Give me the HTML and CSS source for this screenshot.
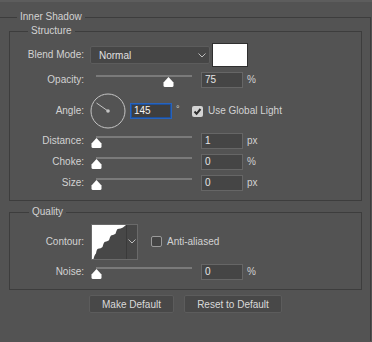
FILE: index.html
```html
<!DOCTYPE html>
<html lang="en">

<head>
    <meta charset="utf-8">
    <meta name="viewport" content="width=device-width, initial-scale=1.0">
    <title>Inner Shadow</title>
    <link rel="stylesheet" href="styles.css">
</head>

<body>

    <div class="edge"></div>

    <section class="panel">
        <div class="title">Inner Shadow</div>

        <div class="group">
            <div class="title title-structure">Structure</div>

            <div class="row row-blend">
                <span class="label">Blend Mode:</span>
                <div class="select">
                    <span>Normal</span>
                    <svg class="chev" width="8" height="5" viewBox="0 0 8 5">
                        <polyline points="0.5,0.5 4,4 7.5,0.5" fill="none" stroke="#bdbdbd" stroke-width="1" />
                    </svg>
                </div>
                <div class="swatch"></div>
            </div>

            <div class="row">
                <span class="label">Opacity:</span>
                <div class="slider">
                    <div class="track">
                        <svg class="thumb" style="left: 75%" width="11" height="10" viewBox="0 0 11 10">
                            <path d="M5.5 0 L10.5 5.5 V8.5 Q10.5 10 9 10 H2 Q0.5 10 0.5 8.5 V5.5 Z" fill="#fff" />
                        </svg>
                    </div>
                </div>
                <div class="num">75</div>
                <span class="unit">%</span>
            </div>

            <div class="row row-angle">
                <span class="label">Angle:</span>
                <svg class="dial" width="36" height="36" viewBox="0 0 36 36">
                    <circle cx="18" cy="18" r="17" fill="none" stroke="#c4c4c4" stroke-width="1" />
                    <line x1="18" y1="18" x2="6.5" y2="10" stroke="#c4c4c4" stroke-width="1" />
                    <circle cx="18" cy="18" r="1.8" fill="#c4c4c4" />
                </svg>
                <div class="num num-focus">145</div>
                <span class="unit unit-deg">°</span>
                <svg class="check" width="11" height="11" viewBox="0 0 11 11">
                    <rect x="0" y="0" width="11" height="11" rx="2" fill="#d4d4d4" />
                    <polyline points="2.5,5.5 4.6,7.8 8.5,3" fill="none" stroke="#2e2e2e" stroke-width="2" />
                </svg>
                <span class="check-text">Use Global Light</span>
            </div>

            <div class="row row-tight">
                <span class="label">Distance:</span>
                <div class="slider">
                    <div class="track">
                        <svg class="thumb" style="left: 0%" width="11" height="10" viewBox="0 0 11 10">
                            <path d="M5.5 0 L10.5 5.5 V8.5 Q10.5 10 9 10 H2 Q0.5 10 0.5 8.5 V5.5 Z" fill="#fff" />
                        </svg>
                    </div>
                </div>
                <div class="num">1</div>
                <span class="unit">px</span>
            </div>

            <div class="row">
                <span class="label">Choke:</span>
                <div class="slider">
                    <div class="track">
                        <svg class="thumb" style="left: 0%" width="11" height="10" viewBox="0 0 11 10">
                            <path d="M5.5 0 L10.5 5.5 V8.5 Q10.5 10 9 10 H2 Q0.5 10 0.5 8.5 V5.5 Z" fill="#fff" />
                        </svg>
                    </div>
                </div>
                <div class="num">0</div>
                <span class="unit">%</span>
            </div>

            <div class="row">
                <span class="label">Size:</span>
                <div class="slider">
                    <div class="track">
                        <svg class="thumb" style="left: 0%" width="11" height="10" viewBox="0 0 11 10">
                            <path d="M5.5 0 L10.5 5.5 V8.5 Q10.5 10 9 10 H2 Q0.5 10 0.5 8.5 V5.5 Z" fill="#fff" />
                        </svg>
                    </div>
                </div>
                <div class="num">0</div>
                <span class="unit">px</span>
            </div>
        </div>

        <div class="group group-quality">
            <div class="title title-quality">Quality</div>

            <div class="row row-contour">
                <span class="label">Contour:</span>
                <div class="contour">
                    <svg class="curve" width="34" height="34" viewBox="0 0 34 34">
                        <rect width="34" height="34" fill="#fff" />
                        <path d="M1.5 34 Q2.5 29.5 4 28.5 Q4.5 24.5 6 23.8 Q9 23.5 10.5 22 Q11.5 18 12.5 17 Q15.5 16.5 17 15.3 Q18 11.5 19 10.5 Q22 10 23.5 8.8 Q24.5 5 25.5 4 Q29 3.5 31 2.5 Q32.5 1 34 0 V34 Z" fill="#474747" />
                    </svg>
                    <div class="contour-arrow">
                        <svg width="8" height="5" viewBox="0 0 8 5">
                            <polyline points="0.5,0.5 4,4 7.5,0.5" fill="none" stroke="#bdbdbd" stroke-width="1" />
                        </svg>
                    </div>
                </div>
                <span class="box"></span>
                <span class="check-text">Anti-aliased</span>
            </div>

            <div class="row row-noise">
                <span class="label">Noise:</span>
                <div class="slider">
                    <div class="track">
                        <svg class="thumb" style="left: 0%" width="11" height="10" viewBox="0 0 11 10">
                            <path d="M5.5 0 L10.5 5.5 V8.5 Q10.5 10 9 10 H2 Q0.5 10 0.5 8.5 V5.5 Z" fill="#fff" />
                        </svg>
                    </div>
                </div>
                <div class="num">0</div>
                <span class="unit">%</span>
            </div>
        </div>

        <div class="buttons">
            <button class="btn btn-make">Make Default</button>
            <button class="btn btn-reset">Reset to Default</button>
        </div>
    </section>

</body>

</html>
```

FILE: styles.css
```css
html {
    background-color: #535353;
}

body {
    margin: 0;
    width: 372px;
    height: 342px;
    overflow: hidden;
    font-family: "Liberation Sans", Arial, sans-serif;
    font-size: 10px;
    color: #d2d2d2;
}

.edge {
    height: 2px;
    background: #5d5d5d;
}

.panel {
    margin: 15px 1px 0 -3px;
    border: 1px solid #3d3d3d;
    border-bottom: none;
    padding: 0 8px 28px 11px;
}

.title {
    width: max-content;
    margin: -7px 0 0 8px;
    padding: 0 3px;
    line-height: 12px;
    background: #535353;
}

.title-structure {
    margin-left: 18px;
}

.title-quality {
    margin-left: 19px;
}

.group {
    margin-top: 8px;
    border: 1px solid #3d3d3d;
    padding: 0 0 9px 0;
}

.group-quality {
    margin-top: 11px;
}

.row {
    display: flex;
    align-items: center;
    height: 16px;
    margin-top: 5px;
}

.row-blend {
    height: 24px;
    margin-top: 6px;
}

.row-angle {
    height: 36px;
}

.row-tight {
    margin-top: 4px;
}

.row-contour {
    height: 35px;
    margin-top: 6px;
}

.label {
    flex: none;
    width: 74px;
    margin-right: 6px;
    text-align: right;
    line-height: 12px;
}

.select {
    box-sizing: border-box;
    width: 120px;
    height: 18px;
    display: flex;
    align-items: center;
    justify-content: space-between;
    padding: 0 3px 0 8px;
    background: #464646;
    border: 1px solid #5c5c5c;
    border-radius: 2px;
    color: #e0e0e0;
}

.swatch {
    box-sizing: border-box;
    width: 36px;
    height: 24px;
    margin-left: 2px;
    background: #fff;
    border: 1px solid #2f2f2f;
}

.slider {
    width: 107px;
    height: 16px;
    margin-right: 4px;
}

.track {
    position: relative;
    width: 96px;
    height: 2px;
    margin: 3px 0 0 6px;
    background: #7a7a7a;
}

.thumb {
    position: absolute;
    top: 2px;
    margin-left: -5.5px;
}

.num {
    box-sizing: border-box;
    width: 42px;
    height: 16px;
    padding-left: 3px;
    line-height: 14px;
    background: #454545;
    border: 1px solid #666;
    color: #e6e6e6;
}

.num-focus {
    background: #3e3e3e;
    border: 1px solid #2763bd;
    box-shadow: inset 0 0 0 1px #1f4f96;
    color: #f4f4f4;
}

.unit {
    padding-left: 4px;
    line-height: 12px;
}

.unit-deg {
    box-sizing: border-box;
    width: 20px;
    align-self: flex-start;
    margin-top: 10px;
    font-size: 9px;
}

.dial {
    flex: none;
    margin-right: 4px;
}

.check {
    flex: none;
}

.check-text {
    margin-left: 5px;
    line-height: 12px;
}

.contour {
    box-sizing: border-box;
    display: flex;
    width: 47px;
    height: 36px;
    margin-left: 1px;
    border: 1px solid #6a6a6a;
    background: #474747;
}

.curve {
    display: block;
}

.contour-arrow {
    flex: 1;
    display: flex;
    align-items: center;
    justify-content: center;
    border-left: 1px solid #3a3a3a;
}

.box {
    box-sizing: border-box;
    width: 11px;
    height: 11px;
    margin-left: 13px;
    border: 1px solid #9a9a9a;
    border-radius: 2px;
    background: #444;
}

.row-noise {
    margin-top: 4px;
    height: 17px;
}

.buttons {
    display: flex;
    justify-content: center;
    gap: 10px;
    margin-top: 5px;
}

.btn {
    height: 18px;
    padding: 0;
    font-family: "Liberation Sans", Arial, sans-serif;
    font-size: 10px;
    color: #dadada;
    background: #484848;
    border: 1px solid #5c5c5c;
    border-radius: 2px;
}

.btn-make {
    width: 85px;
}

.btn-reset {
    width: 98px;
}
```
